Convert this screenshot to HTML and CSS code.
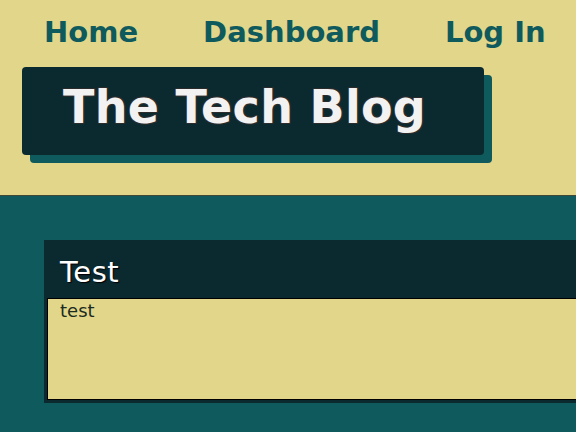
FILE: index.html
```html
<!DOCTYPE html>
<html lang="en">
<head>
<meta charset="utf-8">
<title>The Tech Blog</title>
<link rel="stylesheet" href="styles.css">
</head>
<body>
<header class="site-header">
  <nav class="nav">
    <a class="nav-link" href="#">Home</a>
    <a class="nav-link" href="#">Dashboard</a>
    <a class="nav-link" href="#">Log In</a>
  </nav>
  <div class="brand">
    <h1 class="brand-title">The Tech Blog</h1>
  </div>
</header>
<main class="main">
  <article class="post">
    <h2 class="post-title">Test</h2>
    <div class="post-body">test</div>
  </article>
</main>
</body>
</html>
```
FILE: styles.css
```css
html, body {
  margin: 0;
  padding: 0;
}
body {
  background: #e1d689;
  font-family: "DejaVu Sans", Verdana, sans-serif;
  overflow: hidden;
  height: 432px;
}
.site-header {
  height: 196px;
  box-sizing: border-box;
  border-bottom: 1px solid #3e4a36;
  padding-top: 12px;
}
.nav {
  display: flex;
  gap: 65px;
  padding-left: 44px;
  height: 40px;
  align-items: center;
}
.nav-link {
  color: #0f5a5c;
  text-decoration: none;
  font-weight: bold;
  font-size: 29px;
  line-height: 32px;
}
.brand {
  margin: 15px 0 0 22px;
  width: 462px;
  height: 88px;
  background: #0a2a30;
  border-radius: 4px;
  box-shadow: 8px 8px 0 #0f5a5c;
  padding-left: 41px;
  box-sizing: border-box;
}
.brand-title {
  margin: 0;
  color: #f2f2f2;
  font-size: 46px;
  line-height: 80px;
  font-weight: bold;
  letter-spacing: 0.3px;
  text-shadow: -1px -1px 0 #2b2b2b, 1px -1px 0 #2b2b2b, -1px 1px 0 #2b2b2b, 1px 1px 0 #2b2b2b;
}
.main {
  background: #0f5a5c;
  height: 236px;
  padding: 44px 0 0 44px;
  box-sizing: border-box;
}
.post {
  width: 620px;
  background: #0a2a30;
  padding: 0 3px 3px 3px;
}
.post-title {
  margin: 0;
  height: 58px;
  padding-left: 13px;
  color: #ffffff;
  font-weight: normal;
  font-size: 29px;
  line-height: 64px;
  letter-spacing: 0.5px;
  text-shadow: 1px 1px 1px #000;
}
.post-body {
  border: 1px solid #000;
  background: #e1d689;
  height: 98px;
  padding: 1px 12px;
  color: #1c2b22;
  font-size: 18px;
  line-height: 22px;
}
```
